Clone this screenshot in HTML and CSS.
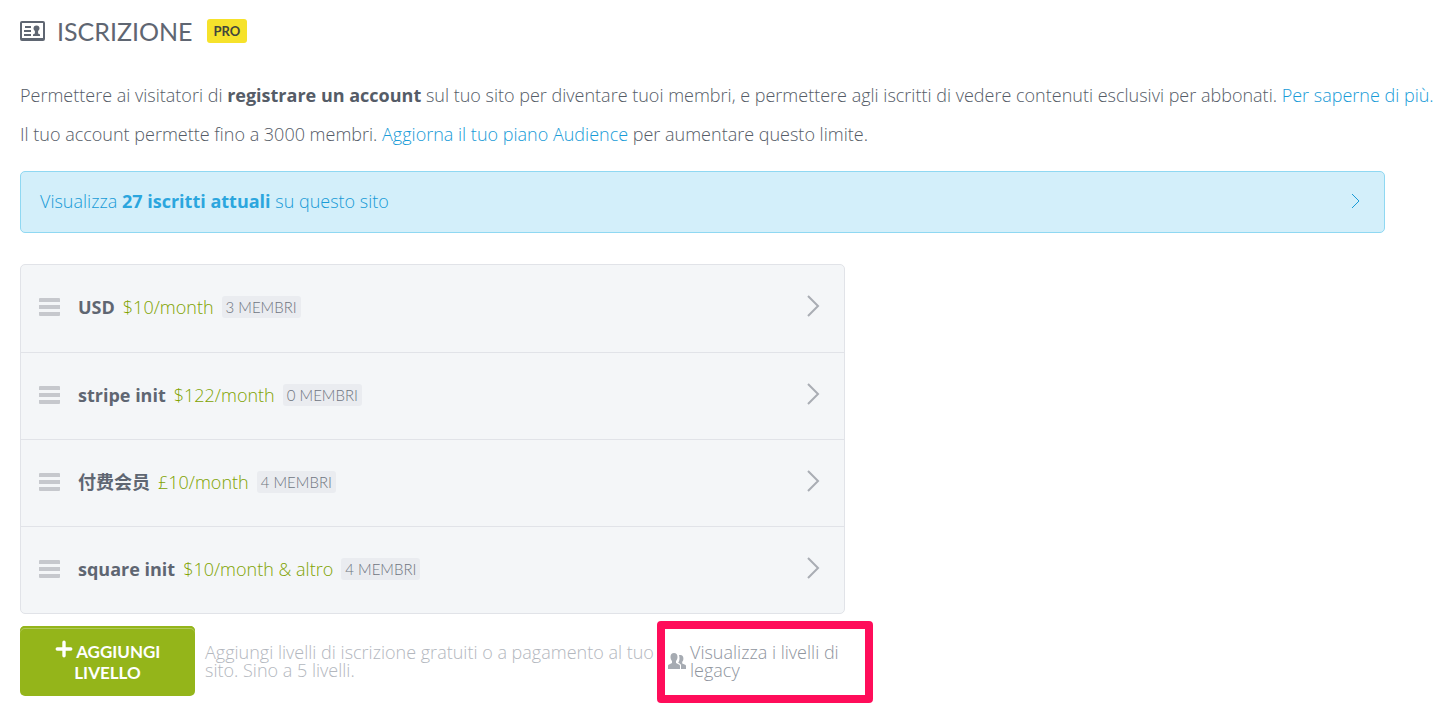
FILE: index.html
```
<!DOCTYPE html>
<html lang="it">
<head>
  <meta charset="UTF-8">
  <meta name="viewport" content="width=device-width, initial-scale=1">
  <title>Iscrizione</title>
  <link rel="stylesheet" href="styles.css">
</head>
<body>
  <main class="page">

    <header class="page-header">
      <svg class="page-header__icon" viewBox="0 0 25 20" aria-hidden="true">
        <path fill="currentColor" fill-rule="evenodd" d="M2 0h21a2 2 0 0 1 2 2v16a2 2 0 0 1-2 2H2a2 2 0 0 1-2-2V2a2 2 0 0 1 2-2zm0 2v15h21V2z"/>
        <path fill="currentColor" d="M5 5h6v2H5zM4 9h7v2H4zM4 13h7v2H4zM16.500 4.500a3 3 0 0 1 3 3c0 1.200-.9 2-1.400 2.600v2.400l1.900 1V15h-7v-1.500l1.900-1v-2.400c-.5-.6-1.400-1.400-1.400-2.600a3 3 0 0 1 3-3z"/>
      </svg>
      <h1>Iscrizione</h1>
      <span class="pro">Pro</span>
    </header>

    <p>Permettere ai visitatori di <strong>registrare un account</strong> sul tuo sito per diventare tuoi membri, e permettere agli iscritti di vedere contenuti esclusivi per abbonati. <a href="#">Per saperne di più.</a></p>
    <p>Il tuo account permette fino a 3000 membri. <a href="#">Aggiorna il tuo piano Audience</a> per aumentare questo limite.</p>

    <a class="banner" href="#">
      <span>Visualizza <strong>27 iscritti attuali</strong> su questo sito</span>
      <svg class="banner__arrow" viewBox="0 0 10 16" aria-hidden="true"><path d="M1 1l7 7-7 7"/></svg>
    </a>

    <!-- Livelli -->
    <ul class="levels">
      <li>
        <a class="level" href="#">
          <span class="handle"></span>
          <strong class="level__name">USD</strong>
          <span class="level__price">$10/month</span>
          <span class="level__count">3 membri</span>
          <svg class="level__arrow" viewBox="0 0 13 22" aria-hidden="true"><path d="M1 1l10 10L1 21"/></svg>
        </a>
      </li>
      <li>
        <a class="level" href="#">
          <span class="handle"></span>
          <strong class="level__name">stripe init</strong>
          <span class="level__price">$122/month</span>
          <span class="level__count">0 membri</span>
          <svg class="level__arrow" viewBox="0 0 13 22" aria-hidden="true"><path d="M1 1l10 10L1 21"/></svg>
        </a>
      </li>
      <li>
        <a class="level" href="#">
          <span class="handle"></span>
          <strong class="level__name">付费会员</strong>
          <span class="level__price">£10/month</span>
          <span class="level__count">4 membri</span>
          <svg class="level__arrow" viewBox="0 0 13 22" aria-hidden="true"><path d="M1 1l10 10L1 21"/></svg>
        </a>
      </li>
      <li>
        <a class="level" href="#">
          <span class="handle"></span>
          <strong class="level__name">square init</strong>
          <span class="level__price">$10/month &amp; altro</span>
          <span class="level__count">4 membri</span>
          <svg class="level__arrow" viewBox="0 0 13 22" aria-hidden="true"><path d="M1 1l10 10L1 21"/></svg>
        </a>
      </li>
    </ul>

    <div class="actions">
      <button type="button" class="add-button">
        <svg class="add-button__plus" viewBox="0 0 16 16" aria-hidden="true"><path d="M8 2v12M2 8h12"/></svg>
        Aggiungi livello
      </button>
      <span class="actions__note">Aggiungi livelli di iscrizione gratuiti o a pagamento al tuo sito. Sino a 5 livelli.</span>
      <a class="legacy" href="#">
        <svg class="legacy__icon" viewBox="0 0 18 16" aria-hidden="true">
          <path fill="currentColor" d="M6 0c2.200 0 3.500 1.600 3.500 4 0 1.800-.7 3.200-1.500 4v2l3 1.400c.8.400 1 .8 1 1.600v3H0v-3c0-.8.200-1.200 1-1.600L4 10V8c-.8-.8-1.500-2.200-1.500-4C2.500 1.600 3.800 0 6 0z"/>
          <path fill="currentColor" d="M12.500 2C14.300 2 15.400 3.400 15.400 5.400c0 1.500-.5 2.600-1.200 3.300v1.700l2.900 1.300c.7.300.9.700.9 1.300v3h-5v-3.500c0-1-.5-1.600-1.400-2.100l-1.400-.7c.9-1 1.300-2.600 1.300-4.400 0-1.200-.2-2.200-.6-3 .5-.2 1-.3 1.600-.3z"/>
        </svg>
        <span>Visualizza i livelli di legacy</span>
      </a>
    </div>

  </main>
</body>
</html>
```
FILE: styles.css
```
/* ---------- BASE ---------- */
* {
  box-sizing: border-box;
  margin: 0;
  padding: 0;
}
body {
  background: #fff;
  color: #555c67;
  font-family: 'Open Sans', 'Noto Sans CJK SC', sans-serif;
  font-size: 18px;
  font-weight: 300;
  line-height: 24px;
}
a {
  color: #189bd7;
  text-decoration: none;
}
strong {
  font-weight: 700;
}
p {
  margin-bottom: 15px;
}
.page {
  padding: 16px 0 12px 20px;
}

/* ---------- HEADER ---------- */
.page-header {
  display: flex;
  align-items: center;
  height: 30px;
  margin-bottom: 37px;
  color: #5f6672;
}
.page-header__icon {
  width: 25px;
  height: 20px;
  margin-right: 12px;
}
.page-header h1 {
  font-family: Lato, sans-serif;
  font-size: 25px;
  font-weight: 400;
  text-transform: uppercase;
}
.pro {
  margin-left: 14px;
  padding: 0 7px;
  border-radius: 3px;
  background: #f6e22b;
  color: #43463c;
  font-family: Lato, sans-serif;
  font-size: 13px;
  font-weight: 700;
  text-transform: uppercase;
}

/* ---------- BANNER ---------- */
.banner {
  display: flex;
  align-items: center;
  justify-content: space-between;
  margin: 25px 62px 31px 0;
  padding: 17px 23px 19px 19px;
  border: 1px solid #8fd8f2;
  border-radius: 5px;
  background: #d3effa;
}
.banner strong {
  color: #2ba6de;
}
.banner__arrow {
  width: 10px;
  height: 16px;
  fill: none;
  stroke: currentColor;
}

/* ---------- LEVELS ---------- */
.levels {
  display: grid;
  grid-auto-rows: 1fr;
  max-width: 825px;
  min-height: 350px;
  border: 1px solid #e1e3e8;
  border-radius: 5px;
  background: #f4f6f8;
  list-style: none;
}
.levels li + li {
  border-top: 1px solid #e1e3e8;
}
.level {
  display: flex;
  align-items: center;
  padding: 30px 24px 32px 18px;
}
.handle {
  width: 21px;
  height: 18px;
  margin-right: 18px;
  border-top: 4px solid #c6c8cd;
  border-bottom: 4px solid #c6c8cd;
  border-radius: 1px;
  background: linear-gradient(#c6c8cd, #c6c8cd) center / 100% 4px no-repeat;
}
.level__name {
  color: #5f6672;
}
.level__price {
  margin: 0 8px;
  color: #7fa300;
}
.level__count {
  padding: 0 4px;
  border-radius: 3px;
  background: #eaecf0;
  color: #6f757f;
  font-family: Lato, sans-serif;
  font-size: 15px;
  line-height: 22px;
  text-transform: uppercase;
}
.level__arrow {
  width: 13px;
  height: 22px;
  margin: 0 0 2px auto;
  fill: none;
  stroke: #a9adb4;
  stroke-width: 2;
}

/* ---------- ACTIONS ---------- */
.actions {
  display: flex;
  align-items: center;
  max-width: 845px;
  margin-top: 12px;
  line-height: 18px;
}
.add-button {
  flex: none;
  width: 175px;
  height: 70px;
  padding: 0 24px;
  border: 0;
  border-radius: 5px;
  background: #94b51a;
  box-shadow: inset 0 2px 0 #94b51a, inset 0 3px 0 #b0c95a;
  color: #fff;
  font-family: Lato, sans-serif;
  font-size: 17px;
  font-weight: 700;
  line-height: 21px;
  text-transform: uppercase;
  cursor: pointer;
}
.add-button__plus {
  width: 18px;
  height: 18px;
  fill: none;
  stroke: currentColor;
  stroke-width: 3;
  stroke-linecap: round;
}
.actions__note {
  flex: 1;
  margin-left: 10px;
  color: #b3b7be;
}
.legacy {
  position: relative;
  display: flex;
  align-items: center;
  gap: 4px;
  width: 197px;
  color: #8f959e;
}
.legacy__icon {
  flex: none;
  width: 18px;
  height: 16px;
  color: #a6abb2;
}
/* highlight frame drawn over the neighbouring text */
.legacy::after {
  content: "";
  position: absolute;
  inset: -22px -8px -24px -11px;
  border: 8px solid #ff0d5a;
  border-radius: 4px;
}
```
